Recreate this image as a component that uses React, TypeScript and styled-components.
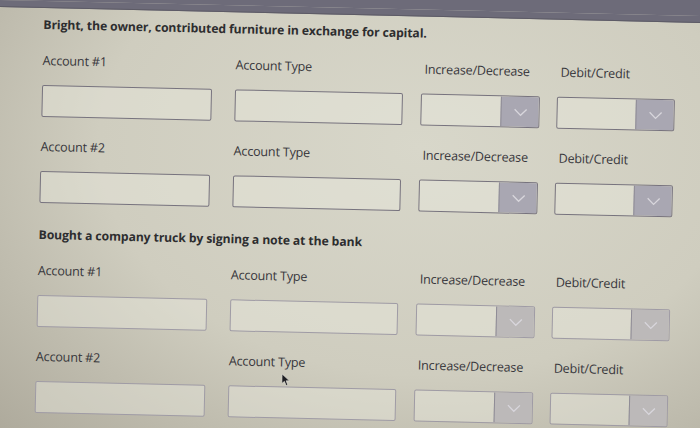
import React from "react";
import styled, { createGlobalStyle } from "styled-components";

// Page chrome: the screen photo is slightly tilted, the top strip is the monitor bezel
const GlobalStyle = createGlobalStyle`
  html, body {
    margin: 0;
    padding: 0;
    width: 700px;
    height: 428px;
    overflow: hidden;
    background: #6d6b79;  /* bezel gray */
  }
`;

interface Column {
  label: string;
  width: number;
  gap: number;
  select?: boolean;
}

interface EntryProps {
  account: string;
  fade?: number;
}

const Chevron: React.FC = () => (
  <svg width="14" height="9" viewBox="0 0 14 9" fill="none">
    <path d="M1 1.5 L7 7.5 L13 1.5" stroke="#d8d6dc" strokeWidth="1.3" />
  </svg>
);

const Entry: React.FC<EntryProps> = ({ account, fade = 0 }) => {
  const cols: Column[] = [
    { label: account, width: 170, gap: 0 },
    { label: "Account Type", width: 168, gap: 23 },
    { label: "Increase/Decrease", width: 119, gap: 18, select: true },
    { label: "Debit/Credit", width: 118, gap: 17, select: true },
  ];
  return (
    <EntryRow>
      {cols.map((c) => (
        <Field key={c.label} $width={c.width} $gap={c.gap}>
          <Label $indent={c.select ? 3 : 0}>{c.label}</Label>
          {c.select ? (
            <Select $fade={fade}>
              <SelectValue />
              <SelectButton $fade={fade}>
                <Chevron />
              </SelectButton>
            </Select>
          ) : (
            <TextBox $fade={fade} />
          )}
        </Field>
      ))}
    </EntryRow>
  );
};

const App: React.FC = () => (
  <>
    <GlobalStyle />
    <Screen>
      <Bezel />
      <Content>
        <Question>
          <Heading>Bright, the owner, contributed furniture in exchange for capital.</Heading>
          <Entry account="Account #1" />
          <Entry account="Account #2" fade={0.3} />
        </Question>
        <Question>
          <Heading>Bought a company truck by signing a note at the bank</Heading>
          <Entry account="Account #1" fade={0.6} />
          <Entry account="Account #2" fade={0.9} />
        </Question>
      </Content>
      <Cursor width="9" height="13" viewBox="0 0 9 13">
        <path d="M0.5 0.5 L0.5 10 L3 7.8 L4.8 12 L6.4 11.3 L4.7 7.2 L8 7.2 Z" fill="#1e1e22" stroke="#e6e6e0" strokeWidth="0.6" />
      </Cursor>
    </Screen>
  </>
);

const Screen = styled.div`
  position: relative;
  width: 730px;
  height: 460px;
  transform-origin: 0 0;
  transform: rotate(1.3deg);
  background: radial-gradient(
    ellipse 80% 90% at 58% 30%,
    #d8d7ca 0%,
    #cfcdbf 55%,
    #aeaa9c 100%
  );
  font-family: "Open Sans", "DejaVu Sans", sans-serif;
  display: flex;
  flex-direction: column;
`;

const Bezel = styled.div`
  height: 6px;
  background: #6d6b79;
  border-bottom: 1px solid #5d5b66;
`;

const Content = styled.div`
  padding: 9px 0 0 44px;
  display: flex;
  flex-direction: column;
  gap: 24px;
`;

const Question = styled.section`
  display: flex;
  flex-direction: column;
  gap: 22px;
`;

const Heading = styled.h2`
  margin: 0 0 -2px;
  font-size: 12.2px;
  line-height: 16px;
  font-weight: 700;
  color: #2d2d2f;
  letter-spacing: -0.1px;
`;

const EntryRow = styled.div`
  display: flex;
  align-items: flex-start;
`;

const Field = styled.div<{ $width: number; $gap: number }>`
  width: ${(p) => p.$width}px;
  margin-left: ${(p) => p.$gap}px;
  display: flex;
  flex-direction: column;
  gap: 16px;
`;

const Label = styled.div<{ $indent: number }>`
  padding-left: ${(p) => p.$indent}px;
  font-size: 12.6px;
  line-height: 16px;
  color: #38373c;
  letter-spacing: -0.2px;
  white-space: nowrap;
`;

const TextBox = styled.div<{ $fade: number }>`
  height: 32px;
  box-sizing: border-box;
  border: 1.5px solid ${(p) => (p.$fade > 0.5 ? "#9f9ba5" : "#77737e")};
  border-radius: 2px;
  background: rgba(232, 232, 222, 0.45);
`;

const Select = styled.div<{ $fade: number }>`
  height: 32px;
  box-sizing: border-box;
  border: 1.5px solid ${(p) => (p.$fade > 0.5 ? "#9f9ba5" : "#77737e")};
  border-radius: 2px;
  display: flex;
  overflow: hidden;
`;

const SelectValue = styled.div`
  flex: 1;
  background: rgba(232, 232, 222, 0.45);
`;

const SelectButton = styled.div<{ $fade: number }>`
  width: 37px;
  border-left: 1px solid #8f8c96;
  background: ${(p) => (p.$fade > 0.5 ? "#bcb9b9" : "#a9a7b2")};
  display: flex;
  align-items: center;
  justify-content: center;
`;

// mouse pointer caught in the photo, floating over the last row
const Cursor = styled.svg`
  position: absolute;
  left: 290px;
  top: 367px;
`;

export default App;
